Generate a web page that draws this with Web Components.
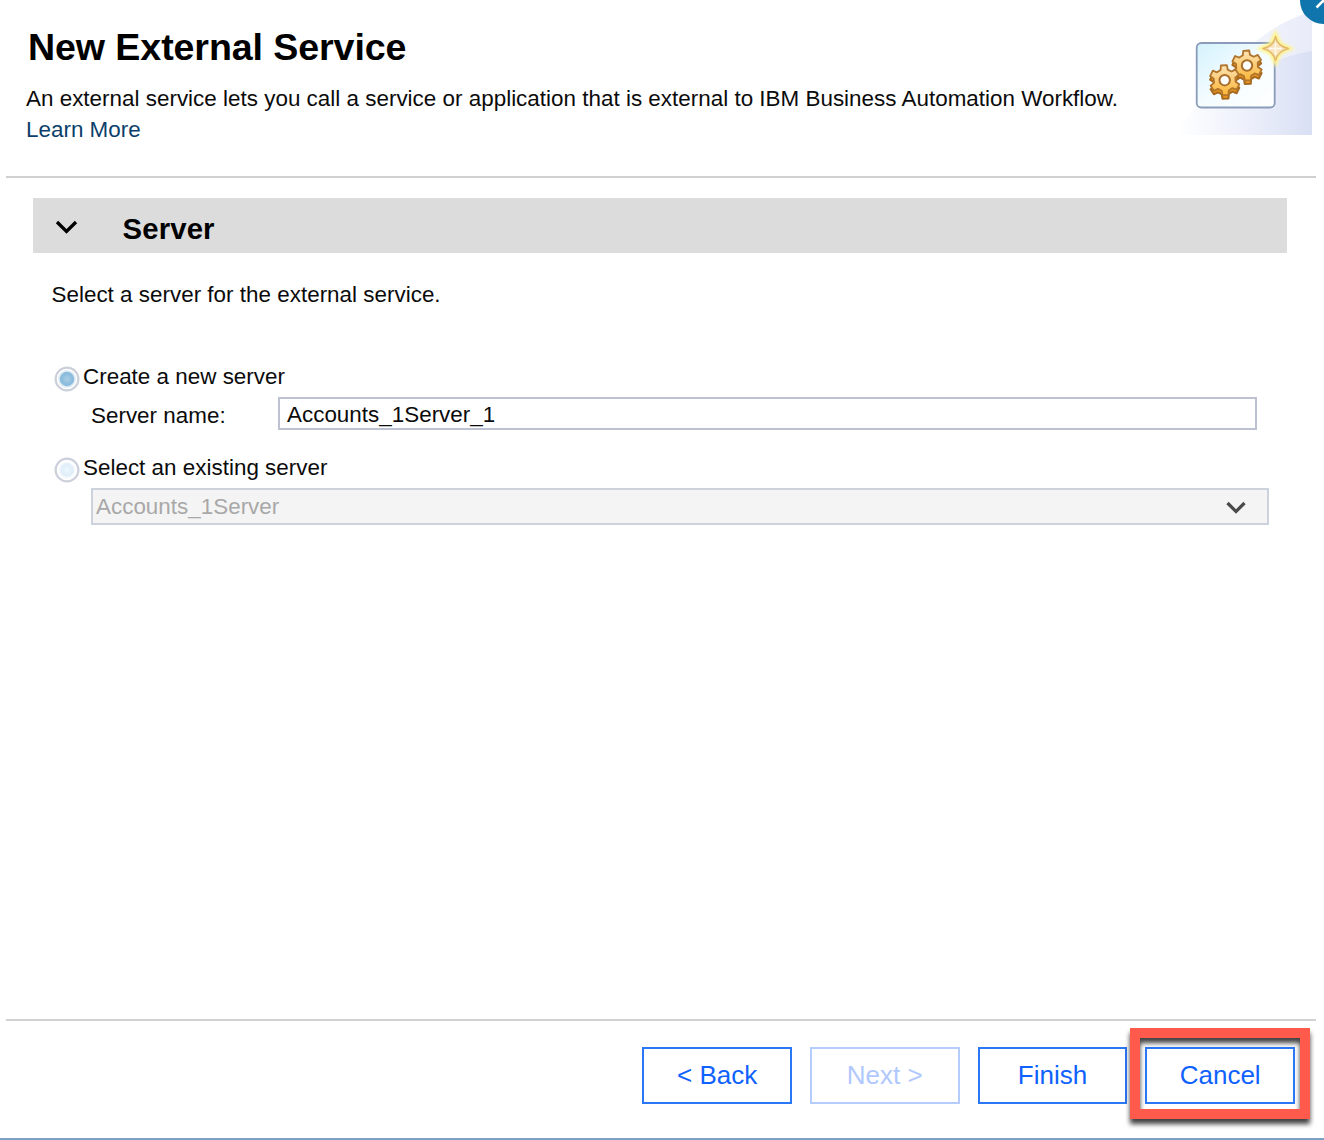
<!DOCTYPE html>
<html lang="en"><head><meta charset="utf-8"><title>New External Service</title>
<style>
body{margin:0;background:#fff;overflow:hidden;font-family:"Liberation Sans",Arial,sans-serif;font-size:22.4px;line-height:31px;color:#0b0b0b}
</style></head><body>
<wizard-dialog>
  <wizard-header slot="header" heading="New External Service">
    An external service lets you call a service or application that is external to IBM Business Automation Workflow.
    <learn-link slot="link">Learn More</learn-link>
    <service-icon slot="icon"></service-icon>
  </wizard-header>
  <wizard-section heading="Server">
    <span slot="intro">Select a server for the external service.</span>
    <radio-option checked label="Create a new server">
      <text-field label="Server name:" value="Accounts_1Server_1"></text-field>
    </radio-option>
    <radio-option label="Select an existing server">
      <select-field value="Accounts_1Server"></select-field>
    </radio-option>
  </wizard-section>
  <wizard-button slot="actions">&lt; Back</wizard-button>
  <wizard-button slot="actions" disabled>Next &gt;</wizard-button>
  <wizard-button slot="actions">Finish</wizard-button>
  <wizard-button slot="actions" highlighted>Cancel</wizard-button>
</wizard-dialog>
<script>
const define = (name, render) => customElements.define(name, class extends HTMLElement {
  constructor() {
    super();
    this.attachShadow({ mode: 'open' });
  }
  connectedCallback() {
    this.shadowRoot.innerHTML = render(this);
  }
});

define('wizard-dialog', () => `<style>
  :host{display:flex;flex-direction:column;position:relative;width:1324px;height:1140px;box-sizing:border-box;border-bottom:2px solid #7c9fc4;overflow:hidden;letter-spacing:.02px}
  main{flex:1}
  footer{display:flex;gap:18px;height:119px;box-sizing:border-box;margin:0 8px 0 6px;padding:26px 21px 0 0;border-top:2px solid #d2d2d2;justify-content:flex-end}
  close-button{position:absolute;left:1300px;top:-23px}
  </style><slot name="header"></slot><main><slot></slot></main><footer><slot name="actions"></slot></footer><close-button></close-button>`);

define('close-button', () => `<style>:host{display:block;width:47px;height:47px}svg{display:block}</style>
  <svg width="47" height="47"><circle cx="23.5" cy="23.5" r="23.5" fill="#1175ad"/><path d="M16.5 16.5 30.5 30.5M30.5 16.5 16.5 30.5" stroke="#fff" stroke-width="2.6"/></svg>`);

define('wizard-header', el => `<style>
  :host{display:flex;height:178px;box-sizing:border-box;margin:0 8px 0 6px;border-bottom:2px solid #d0d0d0;justify-content:space-between}
  .copy{padding:26px 0 0 20px;white-space:nowrap}
  h1{margin:0 0 14px 2px;font-size:37.6px;line-height:43px;letter-spacing:-.09px;color:#000}
  </style><div class="copy"><h1>${el.getAttribute('heading')}</h1><div><slot></slot></div><slot name="link"></slot></div><slot name="icon"></slot>`);

define('learn-link', () => `<style>:host{display:block;color:#0b3f6b}</style><slot></slot>`);

define('service-icon', () => {
  const gear = (cx, cy) => {
    const pts = [];
    for (let i = 0; i < 6; i++) {
      const a = (-93 + i * 60) * Math.PI / 180;
      for (const [d, r] of [[-.33, 11], [-.2, 15.2], [.2, 15.2], [.33, 11]])
        pts.push((cx + r * Math.cos(a + d)).toFixed(1) + ' ' + (cy + r * Math.sin(a + d)).toFixed(1));
    }
    const body = 'M' + pts.join('L') + 'Z';
    return `<path d="${body}" transform="translate(0 3.5)" fill="#e8951c" stroke="#a5691f" stroke-width="2" stroke-linejoin="round"/>
      <path d="${body}" fill="url(#gold)" stroke="#b0742c" stroke-width="1.8" stroke-linejoin="round"/>
      <circle cx="${cx}" cy="${cy}" r="5.2" fill="#fff" stroke="#a86e2b" stroke-width="2"/>`;
  };
  return `<style>:host{display:block;width:136px;height:135px;margin-right:4px}svg{display:block}</style>
  <svg width="136" height="135" viewBox="1176 0 136 135">
  <defs>
    <linearGradient id="wash"><stop offset="0" stop-color="#fff"/><stop offset=".5" stop-color="#eef1fb"/><stop offset="1" stop-color="#d9dff4"/></linearGradient>
    <linearGradient id="panel" x2="1" y2="1"><stop offset="0" stop-color="#d3f2fd"/><stop offset=".5" stop-color="#f4fcff"/><stop offset="1" stop-color="#fff"/></linearGradient>
    <linearGradient id="gold" x2="0" y2="1"><stop offset="0" stop-color="#fbe3b4"/><stop offset="1" stop-color="#fdb536"/></linearGradient>
    <filter id="glow" x="-50%" y="-50%" width="200%" height="200%"><feGaussianBlur stdDeviation="1.8"/></filter>
  </defs>
  <path d="M1176 135C1215 75 1260 25 1312 12V135Z" fill="url(#wash)"/>
  <path d="M1252 41Q1280 20 1312 12V51Q1275 57 1240 80Z" fill="#fff" opacity=".4"/>
  <rect x="1196.7" y="43" width="78" height="64.5" rx="4.5" fill="url(#panel)" stroke="#8a9cb9" stroke-width="1.8"/>
  ${gear(1247, 65.5)}${gear(1224.7, 80.2)}
  <path d="M1275.500 34L1280 44L1290 48.500L1280 53L1275.500 63L1271 53L1261 48.500L1271 44Z" fill="#fff48c" stroke="#fff48c" stroke-width="4" filter="url(#glow)"/>
  <path d="M1275.500 36.500Q1277.500 46.500 1288.500 48.500Q1277.500 51.500 1275.500 60.500Q1273.500 51.500 1263 48.500Q1273.500 46.500 1275.500 36.500Z" fill="#f8e5bd" stroke="#e3b96c" stroke-width="1.6" stroke-linejoin="round"/>
  <path d="M1275.500 43V55M1269 48.500H1282" stroke="#fffaf0" stroke-width="1.3"/>
  </svg>`;
});

define('wizard-section', el => `<style>
  :host{display:block;padding:20px 37px 0 33px}
  header{display:flex;align-items:center;height:55px;background:#dcdcdc}
  svg{margin:3px 0 0 22px}
  h2{margin:6px 0 0 44.500px;font-size:29.300px;letter-spacing:.15px;line-height:40px;color:#000}
  .intro{margin:26px 0 51px 18.500px}
  </style><header><svg width="23" height="16" viewBox="0 0 23 16"><path d="M2 3 11.500 12.500 21 3" fill="none" stroke="#000" stroke-width="3.300"/></svg><h2>${el.getAttribute('heading')}</h2></header>
  <div class="intro"><slot name="intro"></slot></div><slot></slot>`);

define('radio-option', el => {
  const on = el.hasAttribute('checked');
  return `<style>
  :host{display:block;margin:0 -19px 0 20px;height:91px}
  .row{display:flex;gap:3.500px;height:36px}
  svg{margin:5px 0 0 .5px}
  .body{padding-left:38px;display:block}
  </style><div class="row"><svg width="26" height="26" viewBox="0 0 26 26">
  <defs><radialGradient id="g"><stop offset="0" stop-color="${on ? '#a9cde6' : '#eef7fd'}"/><stop offset=".7" stop-color="${on ? '#8bbcdc' : '#dfeef9'}"/><stop offset="1" stop-color="${on ? '#8bbcdc' : '#f1f7fb'}"/></radialGradient></defs>
  <circle cx="13" cy="13" r="11.400" fill="#fff" stroke="#cbd0da" stroke-width="2.200"/>
  <circle cx="13" cy="13" r="8" fill="url(#g)" stroke="${on ? '#dbe9f3' : '#f7fafd'}" stroke-width="1.600"/></svg><span>${el.getAttribute('label')}</span></div><div class="body"><slot></slot></div>`;
});

define('text-field', el => `<style>
  :host{display:flex}
  label{width:187px;padding-top:3px}
  div{width:979px;height:33px;box-sizing:border-box;border:2px solid #bcc2d1;background:#fff;padding-left:7px;line-height:31px}
  </style><label>${el.getAttribute('label')}</label><div>${el.getAttribute('value')}</div>`);

define('select-field', el => `<style>
  :host{display:flex;align-items:center;justify-content:space-between;width:1178px;height:37px;box-sizing:border-box;border:2px solid #cdd3dc;background:#f4f4f4;color:#a8a8a8;padding:0 21.500px 0 3px}
  svg{margin-top:2px}
  </style><span>${el.getAttribute('value')}</span><svg width="20" height="15" viewBox="0 0 20 15"><path d="M1.500 3 10 11.500 18.500 3" fill="none" stroke="#4a4a4a" stroke-width="3.200"/></svg>`);

define('wizard-button', () => `<style>
  :host{display:flex;position:relative;width:149.700px;height:57px;box-sizing:border-box;border:2px solid #2b78f7;color:#0f62fe;font-size:26px;letter-spacing:0;align-items:center;justify-content:center}
  :host([disabled]){border-color:#b5cdfd;color:#b0c8fd}
  :host([highlighted])::after{content:"";position:absolute;left:-17px;top:-21px;width:160px;height:71px;border:10px solid #ff5a4b;filter:drop-shadow(0 5px 2.500px rgba(0,0,0,.75))}
  </style><slot></slot>`);
</script></body></html>
